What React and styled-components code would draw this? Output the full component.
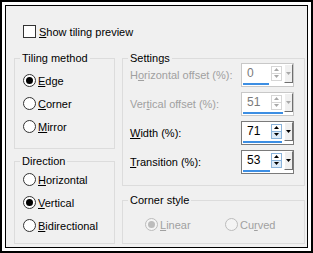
import React from 'react'
import styled, { createGlobalStyle } from 'styled-components'

const GlobalStyle = createGlobalStyle`
  html, body {
    margin: 0;
    padding: 0;
    background: #fff;
  }
  body {
    font-family: "Liberation Sans", Arial, sans-serif;
    font-size: 11px;
    color: #000;
  }
`;

const Frame = styled.div`
  width: 313px;
  height: 253px;
  box-sizing: border-box;
  border: 2px solid #000;
  padding: 3px;
  background: #fff;
`;

const Dialog = styled.div`
  height: 100%;
  box-sizing: border-box;
  border: 1px solid #000;
  background: #f0f0f0;
  padding: 18px 0 0 8px;
  display: flex;
  flex-direction: column;
`;

const CheckRow = styled.label`
  display: flex;
  align-items: center;
  gap: 3px;
  height: 15px;
  margin-left: 9px;
`;

const CheckBox = styled.span`
  width: 13px;
  height: 13px;
  box-sizing: border-box;
  border: 1px solid #333;
  background: #fff;
`;

const Columns = styled.div`
  display: flex;
  gap: 7px;
  margin-top: 12px;
`;

const Column = styled.div`
  display: flex;
  flex-direction: column;
  gap: ${p => p.$gap}px;
  width: ${p => p.$w}px;
`;

const Group = styled.fieldset`
  margin: 0;
  padding: 0;
  min-width: 0;
  box-sizing: border-box;
  border: 1px solid #dcdcdc;
  height: ${p => p.$h}px;
`;

const Legend = styled.legend`
  margin-left: 5px;
  padding: 0 2px;
  line-height: 14px;
  color: #000;
`;

const RadioList = styled.div`
  display: flex;
  flex-direction: column;
  padding: ${p => p.$top}px 0 0 8px;
`;

const RadioRow = styled.label`
  display: flex;
  align-items: center;
  gap: 2px;
  height: 23px;
  width: ${p => (p.$w ? `${p.$w}px` : 'auto')};
  color: ${p => (p.$disabled ? '#a0a0a0' : '#000')};
`;

const RadioCircle = styled.span`
  width: 13px;
  height: 13px;
  box-sizing: border-box;
  border-radius: 50%;
  border: 1px solid ${p => (p.$disabled ? '#bcbcbc' : '#333')};
  background: ${p => (p.$disabled ? '#f4f4f4' : '#fff')};
  display: flex;
  align-items: center;
  justify-content: center;

  &::after {
    content: '';
    display: ${p => (p.$checked ? 'block' : 'none')};
    width: 7px;
    height: 7px;
    border-radius: 50%;
    background: ${p => (p.$disabled ? '#bcbcbc' : '#000')};
  }
`;

const Key = styled.span`
  text-decoration: underline;
`;

const SettingsBody = styled.div`
  display: grid;
  grid-template-columns: 111px 53px;
  grid-auto-rows: 29px;
  align-items: center;
  padding-left: 7px;
  margin-top: -5px;
`;

const FieldLabel = styled.span`
  color: ${p => (p.$disabled ? '#a0a0a0' : '#000')};
`;

const SpinBox = styled.div`
  width: 53px;
  height: 24px;
  box-sizing: border-box;
  border: 1px solid ${p => (p.$disabled ? '#c8c8c8' : '#7a7a7a')};
  background: #fff;
  display: flex;
  flex-direction: column;
`;

const SpinTop = styled.div`
  flex: 1;
  display: flex;
  align-items: center;
`;

const SpinValue = styled.span`
  flex: 1;
  padding-left: 5px;
  font-size: 12px;
  color: ${p => (p.$disabled ? '#7a7a7a' : '#000')};
`;

const Arrows = styled.span`
  width: 11px;
  height: 15px;
  box-sizing: border-box;
  border: 1px solid ${p => (p.$disabled ? '#d6d6d6' : '#8ab3da')};
  display: flex;
  flex-direction: column;
  margin-right: 2px;
`;

const ArrowHalf = styled.span`
  flex: 1;
  display: flex;
  align-items: center;
  justify-content: center;
  border-top: ${p => (p.$lower ? `1px solid ${p.$disabled ? '#d6d6d6' : '#8ab3da'}` : 'none')};
  background: ${p => (p.$lower && !p.$disabled ? '#dceaf7' : 'transparent')};
`;

const Drop = styled.span`
  width: 9px;
  height: 19px;
  align-self: flex-start;
  box-sizing: border-box;
  border-left: 1px solid #fff;
  border-top: 1px solid #fff;
  border-right: 1px solid #6f6f6f;
  border-bottom: 1px solid #6f6f6f;
  background: #f0f0f0;
  display: flex;
  align-items: center;
  justify-content: center;
`;

const Bar = styled.div`
  height: 3px;
  margin: 0 0 1px 1px;
  background: #3c8ee3;
`;

const CornerBody = styled.div`
  display: flex;
  padding: 6px 0 0 22px;
`;

const Tri = ({ down, color }) => (
  <svg width="5" height="3" viewBox="0 0 5 3">
    <path d={down ? 'M0 0H5L2.5 3Z' : 'M0 3H5L2.5 0Z'} fill={color} />
  </svg>
);

const Radio = ({ label, k, checked, disabled, w }) => {
  const i = label.indexOf(k);
  return (
    <RadioRow $disabled={disabled} $w={w}>
      <RadioCircle $checked={checked} $disabled={disabled} />
      <span>
        {label.slice(0, i)}
        <Key>{k}</Key>
        {label.slice(i + 1)}
      </span>
    </RadioRow>
  );
};

const Spinner = ({ value, bar, disabled }) => {
  const c = disabled ? '#a8a8a8' : '#000';
  return (
    <SpinBox $disabled={disabled}>
      <SpinTop>
        <SpinValue $disabled={disabled}>{value}</SpinValue>
        <Arrows $disabled={disabled}>
          <ArrowHalf $disabled={disabled}><Tri color={c} /></ArrowHalf>
          <ArrowHalf $lower $disabled={disabled}><Tri down color={c} /></ArrowHalf>
        </Arrows>
        <Drop><Tri down color={c} /></Drop>
      </SpinTop>
      <Bar style={{ width: bar }} />
    </SpinBox>
  );
};

const settings = [
  { label: 'Horizontal offset (%):', k: 'o', value: '0', bar: 26, disabled: true },
  { label: 'Vertical offset (%):', k: 't', value: '51', bar: 40, disabled: true },
  { label: 'Width (%):', k: 'W', value: '71', bar: 39 },
  { label: 'Transition (%):', k: 'T', value: '53', bar: 27 },
];

export default function App() {
  return (
    <Frame>
      <GlobalStyle />
      <Dialog>
        <CheckRow>
          <CheckBox />
          <span><Key>S</Key>how tiling preview</span>
        </CheckRow>
        <Columns>
          <Column $w={101} $gap={5}>
            <Group $h={98}>
              <Legend>Tiling method</Legend>
              <RadioList $top={4}>
                <Radio label="Edge" k="E" checked />
                <Radio label="Corner" k="C" />
                <Radio label="Mirror" k="M" />
              </RadioList>
            </Group>
            <Group $h={90}>
              <Legend>Direction</Legend>
              <RadioList $top={0}>
                <Radio label="Horizontal" k="H" />
                <Radio label="Vertical" k="V" checked />
                <Radio label="Bidirectional" k="B" />
              </RadioList>
            </Group>
          </Column>
          <Column $w={183} $gap={7}>
            <Group $h={135}>
              <Legend>Settings</Legend>
              <SettingsBody>
                {settings.map(s => {
                  const i = s.label.indexOf(s.k);
                  return (
                    <React.Fragment key={s.label}>
                      <FieldLabel $disabled={s.disabled}>
                        {s.label.slice(0, i)}
                        <Key>{s.k}</Key>
                        {s.label.slice(i + 1)}
                      </FieldLabel>
                      <Spinner value={s.value} bar={s.bar} disabled={s.disabled} />
                    </React.Fragment>
                  );
                })}
              </SettingsBody>
            </Group>
            <Group $h={51}>
              <Legend>Corner style</Legend>
              <CornerBody>
                <Radio label="Linear" k="L" checked disabled w={80} />
                <Radio label="Curved" k="r" disabled />
              </CornerBody>
            </Group>
          </Column>
        </Columns>
      </Dialog>
    </Frame>
  );
}
